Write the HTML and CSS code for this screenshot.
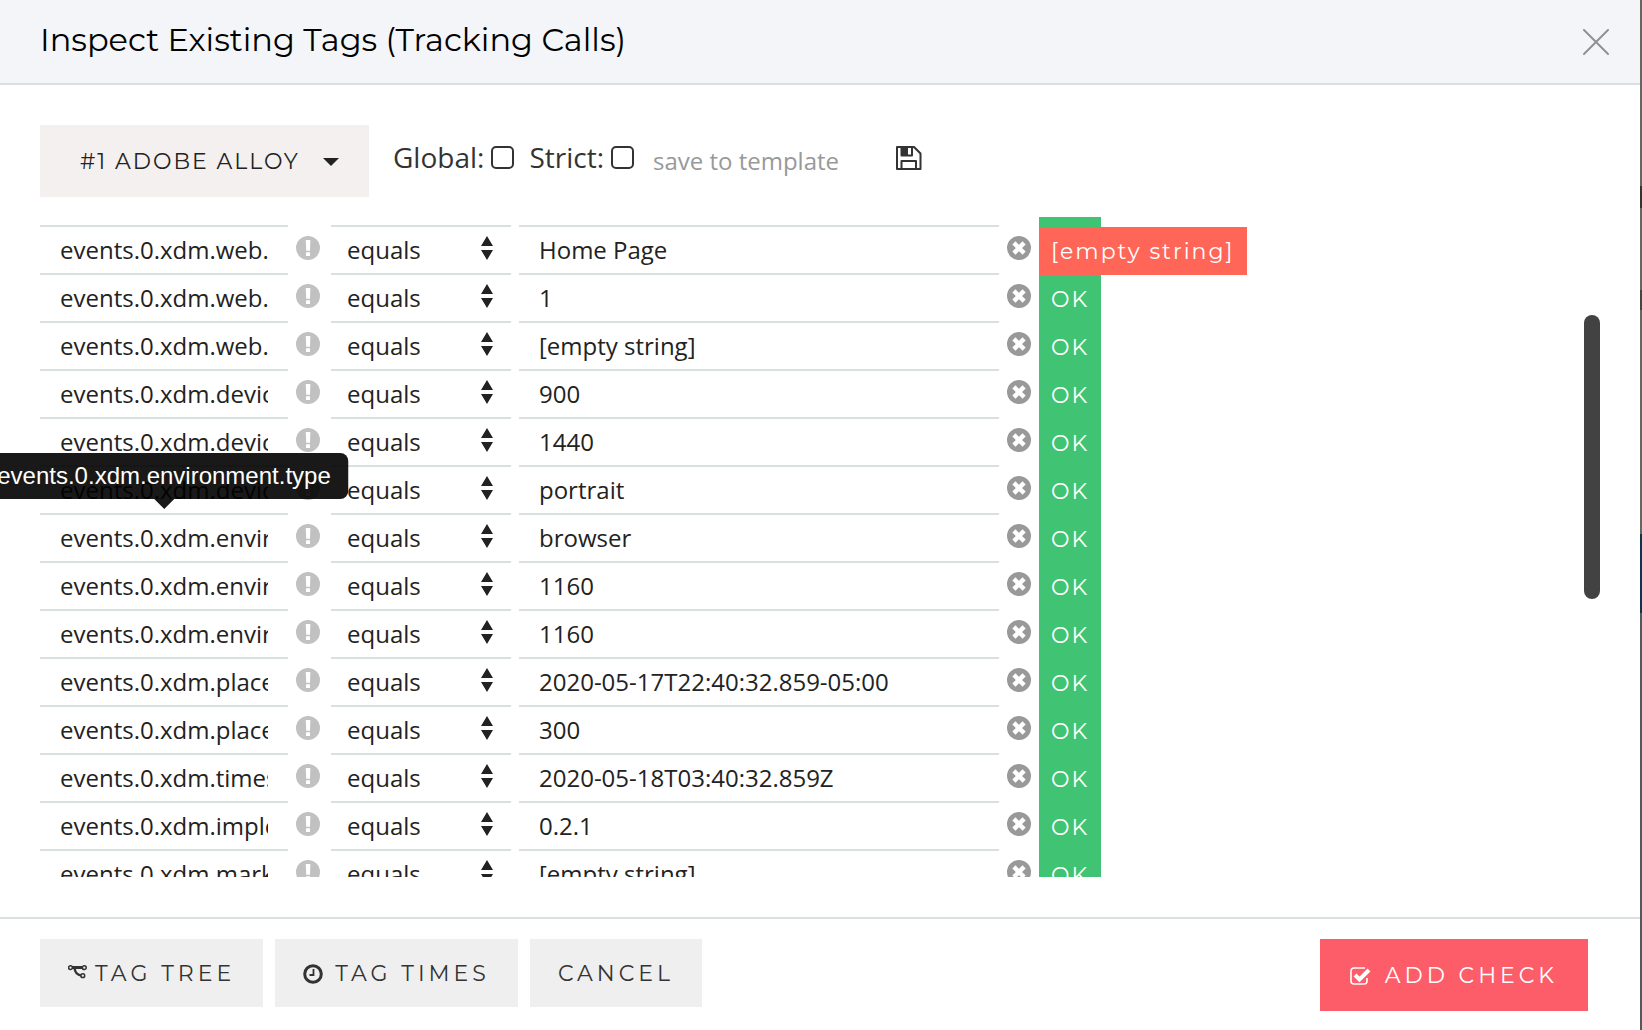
FILE: index.html
```
<!DOCTYPE html>
<html lang="en">
<head>
<meta charset="utf-8">
<title>Inspect Existing Tags</title>
<link rel="stylesheet" href="styles.css">
</head>
<body>
<svg class="sprite" aria-hidden="true">
  <symbol id="info" viewBox="0 0 24 24"><circle cx="12" cy="12" r="12" fill="#c1c1c1"/><path d="M9.800 4h4.600l-.4 10.800h-3.800zM10 16.300h4v3.700h-4z" fill="#fff"/></symbol>
  <symbol id="sort" viewBox="0 0 12 24"><path d="M6 0l6 10H0zM6 24l6-10H0z" fill="#222"/></symbol>
  <symbol id="remove" viewBox="0 0 24 24"><circle cx="12" cy="12" r="12" fill="#999"/><path d="M8.500 8.500l7 7M15.500 8.500l-7 7" stroke="#fff" stroke-width="4.500" stroke-linecap="square"/></symbol>
</svg>
<main class="modal">
  <header class="head">
    <h1>Inspect Existing Tags (Tracking Calls)</h1>
    <button class="close" aria-label="Close"><svg width="26" height="26" viewBox="0 0 26 26"><path d="M1 1l24 24M25 1L1 25" stroke="#8f9193" stroke-width="2" stroke-linecap="round"/></svg></button>
  </header>
  <section class="content">
    <div class="toolbar">
      <button class="picker">#1 ADOBE ALLOY <svg width="16" height="8" viewBox="0 0 16 8"><path d="M0 0h16L8 8z" fill="#222"/></svg></button>
      <div class="options">
        <label class="option">Global:<input type="checkbox"></label>
        <label class="option">Strict:<input type="checkbox"></label>
        <input class="template" type="text" placeholder="save to template" aria-label="Template name">
        <button class="save" aria-label="Save template"><svg width="26" height="24" viewBox="0 0 26 24" fill="none" stroke="#333" stroke-width="2" stroke-linejoin="round"><path d="M1 1h17l6.500 6.500V23H1z"/><path d="M5.500 1v8.500h10.500V1M5.500 23v-8h14.500v8"/><path d="M6 1h5v8H6z" fill="#333"/></svg></button>
      </div>
    </div>
    <div class="scroller">
      <div class="rows" id="rows"></div>
      <div class="thumb"></div>
    </div>
  </section>
  <footer class="foot">
    <button class="btn tree"><svg width="19" height="18" viewBox="0 0 19 18" fill="none" stroke="#333"><path d="M4 2.500h11" stroke-width="3"/><path d="M6.500 3c.5 5 2.500 7 7 7.500" stroke-width="2.500"/><g stroke-width="1.500" fill="#efefef"><circle cx="2.500" cy="2.700" r="1.900"/><circle cx="16.300" cy="2.700" r="1.900"/><circle cx="14.800" cy="10.700" r="1.900"/></g></svg>TAG TREE</button>
    <button class="btn times"><svg width="20" height="20" viewBox="0 0 20 20" fill="none" stroke="#333"><circle cx="10" cy="10" r="8.300" stroke-width="3"/><path d="M10.500 5v6H6.500" stroke-width="1.800"/></svg>TAG TIMES</button>
    <button class="btn">CANCEL</button>
    <button class="btn add"><svg width="21" height="18" viewBox="0 0 21 18" fill="none" stroke="#fff"><path d="M15 1H4Q1 1 1 4v10q0 3 3 3h10q3 0 3-3v-3" stroke-width="1.600"/><path d="M5 8l4.500 4.500L19 3" stroke-width="4"/></svg>ADD CHECK</button>
  </footer>
</main>
<div class="tooltip" role="tooltip">events.0.xdm.environment.type</div>
<script src="rows.js"></script>
</body>
</html>
```
FILE: rows.js
```
const checks = [
  ["events.0.xdm.web.webPageDetails.URL", "", "OK"],
  ["events.0.xdm.web.webPageDetails.name", "Home Page", "[empty string]"],
  ["events.0.xdm.web.webPageDetails.pageViews.value", "1", "OK"],
  ["events.0.xdm.web.webReferrer.URL", "[empty string]", "OK"],
  ["events.0.xdm.device.screenHeight", "900", "OK"],
  ["events.0.xdm.device.screenWidth", "1440", "OK"],
  ["events.0.xdm.device.screenOrientation", "portrait", "OK"],
  ["events.0.xdm.environment.type", "browser", "OK"],
  ["events.0.xdm.environment.browserDetails.viewportWidth", "1160", "OK"],
  ["events.0.xdm.environment.browserDetails.viewportHeight", "1160", "OK"],
  ["events.0.xdm.placeContext.localTime", "2020-05-17T22:40:32.859-05:00", "OK"],
  ["events.0.xdm.placeContext.localTimezoneOffset", "300", "OK"],
  ["events.0.xdm.timestamp", "2020-05-18T03:40:32.859Z", "OK"],
  ["events.0.xdm.implementationDetails.version", "0.2.1", "OK"],
  ["events.0.xdm.marketing.trackingCode", "[empty string]", "OK"]
];

document.getElementById("rows").innerHTML = checks.map(([name, value, result]) => `
  <div class="row">
    <input class="field" type="text" aria-label="Parameter" value="${name}">
    <svg class="icon info" width="24" height="24"><use href="#info"/></svg>
    <span class="operator">
      <select class="field" aria-label="Operator"><option>equals</option><option>contains</option></select>
      <svg width="12" height="24"><use href="#sort"/></svg>
    </span>
    <input class="field" type="text" aria-label="Expected value" value="${value}">
    <button class="icon" aria-label="Remove"><svg width="24" height="24"><use href="#remove"/></svg></button>
    <span class="result ${result === "OK" ? "pass" : "fail"}">${result}</span>
  </div>`).join("");
```
FILE: styles.css
```
* { box-sizing: border-box; }

body {
  margin: 0;
  overflow: hidden;
  font-family: "Open Sans", "Noto Sans", sans-serif;
  font-size: 24px;
  color: #222;
  background: linear-gradient(#666763 186px, #33332f 186px 208px, #666763 208px 290px, #45453f 290px 310px, #666763 310px 534px, #0d3550 534px 613px, #53585b 613px);
}

button {
  border: 0;
  padding: 0;
  background: none;
  color: inherit;
  font: inherit;
}

svg { display: block; flex: none; }

.sprite { position: absolute; width: 0; height: 0; }

.modal {
  display: flex;
  flex-direction: column;
  height: 100vh;
  margin-right: 2px;
  background: #fff;
}

.head {
  display: flex;
  align-items: center;
  justify-content: space-between;
  height: 85px;
  padding: 0 31px 0 40px;
  border-bottom: 2px solid #dcdfe1;
  background: #f4f5f8;
}

h1 {
  margin: 0;
  padding-bottom: 4px;
  font: 400 32px/40px Montserrat, Inter, sans-serif;
  color: #000;
}

.content {
  display: flex;
  flex: 1;
  flex-direction: column;
  gap: 20px;
  min-height: 0;
  padding: 40px;
}

.toolbar { display: flex; gap: 24px; height: 72px; }

.picker {
  display: flex;
  align-items: center;
  justify-content: space-between;
  width: 329px;
  padding: 2px 30px 0 40px;
  background: #f4f0ef;
  font: 400 22px/28px Montserrat, Inter, sans-serif;
  letter-spacing: 2px;
}

.options {
  display: flex;
  align-items: center;
  height: 64px;
  color: #333;
}

.option {
  display: flex;
  align-items: center;
  gap: 7px;
  margin-right: 15px;
  font-size: 28px;
}

.option input {
  appearance: none;
  width: 23px;
  height: 23px;
  margin: 0;
  border: 2px solid #333;
  border-radius: 5px;
}

.template {
  width: 247px;
  padding: 6px 0 0 4px;
  border: 0;
  outline: 0;
  font: inherit;
}

.template::placeholder { color: #999; }

.save { padding-top: 2px; }

.scroller {
  position: relative;
  flex: 1;
  min-height: 0;
  overflow: hidden;
}

.rows { margin-top: -38px; }

.row {
  display: grid;
  grid-template-columns: 248px 43px 180px 8px 480px 40px auto;
  justify-content: start;
  height: 48px;
}

.field {
  appearance: none;
  width: 100%;
  height: 48px;
  padding: 0 20px 2px;
  border: 0;
  border-bottom: 2px solid #dadfdf;
  border-radius: 0;
  background: transparent;
  color: #222;
  font: 24px "Open Sans", "Noto Sans", sans-serif;
}

.icon { place-self: start center; margin-top: 9px; }
.info { margin-right: 3px; }

.operator { display: grid; grid-template-columns: 1fr 12px 18px; }
.operator .field { grid-area: 1 / 1 / 2 / 4; padding: 0 16px 2px; }
.operator svg { grid-area: 1 / 2; margin-top: 9px; pointer-events: none; }

.row > .operator + .field { grid-column: 5; }

.result {
  height: 48px;
  padding: 0 12px;
  color: #fff;
  font: 400 22px/50px Montserrat, Inter, sans-serif;
  letter-spacing: 2px;
}

.pass { width: 62px; background: #40c473; }
.fail { background: #ff6657; }

.thumb {
  position: absolute;
  top: 98px;
  right: 0;
  width: 16px;
  height: 284px;
  border-radius: 8px;
  background: #424242;
}

.foot {
  display: flex;
  align-items: flex-start;
  gap: 12px;
  height: 113px;
  padding: 20px 52px 0 40px;
  border-top: 2px solid #dadfdf;
}

.btn {
  display: flex;
  align-items: center;
  height: 68px;
  padding: 2px 28px 0;
  background: #efefef;
  color: #333;
  font: 400 22px/28px Montserrat, Inter, sans-serif;
  letter-spacing: 4px;
}

.tree { gap: 8px; }
.times { gap: 12px; }

.add {
  gap: 14px;
  height: 72px;
  margin-left: auto;
  padding: 2px 30px 0;
  background: #fd5c69;
  color: #fff;
}

/* Tooltip floats over the list, centred on its field */
.tooltip {
  position: absolute;
  top: 453px;
  left: 164px;
  padding: 0 17px;
  border-radius: 8px;
  background: rgba(0, 0, 0, .9);
  color: #fff;
  font: 24px/46px "Liberation Sans", Arial, sans-serif;
  transform: translateX(-50%);
}

.tooltip::after {
  content: "";
  position: absolute;
  top: 100%;
  left: 50%;
  margin-left: -10px;
  border: 10px solid transparent;
  border-top-color: rgba(0, 0, 0, .9);
  border-bottom: 0;
}
```
